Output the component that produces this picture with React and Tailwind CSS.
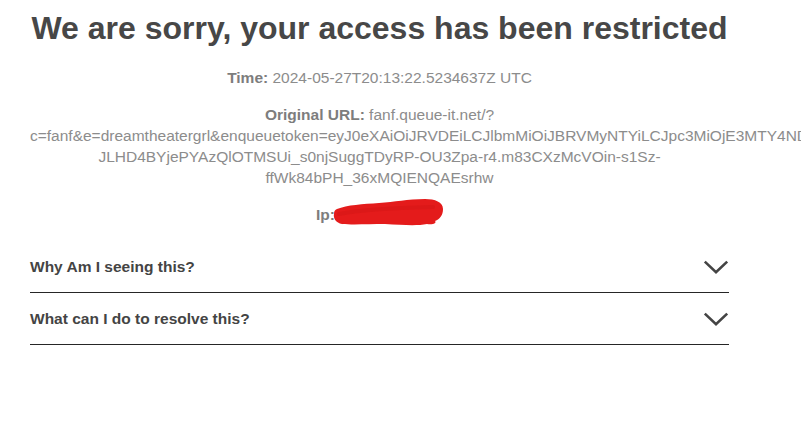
import React, { useState } from "react"

const URL_TEXT =
    "fanf.queue-it.net/?c=fanf&e=dreamtheatergrl&enqueuetoken=eyJ0eXAiOiJRVDEiLCJlbmMiOiJBRVMyNTYiLCJpc3MiOjE3MTY4NDA4MDIzOTAsImV4cCI6MTcxNjg0MDkyMjM5MH0.Hq2x7rTnK-JLHD4BYjePYAzQlOTMSUi_s0njSuggTDyRP-OU3Zpa-r4.m83CXzMcVOin-s1Sz-ffWk84bPH_36xMQIENQAEsrhw"

const faqs = [
    {
        q: "Why Am I seeing this?",
        a: "Your request was flagged by our traffic protection and access to the waiting room has been restricted.",
    },
    {
        q: "What can I do to resolve this?",
        a: "Close other tabs, disable VPN or proxy services and try again in a few minutes.",
    },
]

const Chevron = ({ open }) => (
    <svg
        width="26"
        height="16"
        viewBox="0 0 26 16"
        className={open ? "rotate-180 transition-transform" : "transition-transform"}
    >
        <polyline points="1.8,2.6 13,13.2 24.2,2.6" fill="none" stroke="#444444" strokeWidth="2.6" />
    </svg>
)

// red marker scribble hiding the ip
const Redacted = () => (
    <span className="relative inline-block w-[108px] h-[14px] align-baseline">
        <svg width="112" height="30" viewBox="0 0 112 30" className="absolute left-[-2px] top-[-8px]">
            <path
                d="M4 11 C 14 7, 30 6, 46 5 C 62 4, 74 1, 92 1 C 102 1, 110 4, 110 11 C 110 17, 107 21, 102 23 C 104 25, 100 27, 94 26 C 84 28, 70 27, 52 26 C 36 26, 20 27, 9 26 C 3 25, 0 20, 1 16 C 1 13, 2 12, 4 11 Z"
                fill="#e41b1b"
            />
            <path d="M6 16 C 26 12, 60 10, 100 9" fill="none" stroke="#dc1818" strokeWidth="4" strokeLinecap="round" />
        </svg>
    </span>
)

export default function App() {
    const [open, setOpen] = useState(null)

    return (
        <div className="min-h-screen bg-white overflow-hidden font-['Liberation_Sans',Arial,sans-serif]">
            <div className="ml-[30px] w-[699px] pt-[10px] text-center">
                <h1 className="text-[32px] leading-[36px] font-bold text-[#474747] mb-[21px]">
                    We are sorry, your access has been restricted
                </h1>

                <div className="text-[15.5px] leading-[21px] text-[#8c8c8c]">
                    <p className="mb-[16px]">
                        <span className="font-bold text-[#7d7d7d]">Time:</span> 2024-05-27T20:13:22.5234637Z UTC
                    </p>
                    <p className="mb-[16px] break-normal">
                        <span className="font-bold text-[#7d7d7d]">Original URL:</span> {URL_TEXT}
                    </p>
                    <p className="mb-[16px]">
                        <span className="font-bold text-[#7d7d7d]">Ip:</span>
                        <Redacted />
                    </p>
                </div>

                <div className="text-left">
                    {faqs.map((f, i) => (
                        <div key={f.q} className="border-b border-[#262626]">
                            <button
                                onClick={() => setOpen(open === i ? null : i)}
                                className="w-full flex items-center justify-between py-[15px] cursor-pointer"
                            >
                                <span className="text-[15.5px] leading-[21px] font-bold text-[#444444]">{f.q}</span>
                                <Chevron open={open === i} />
                            </button>
                            {open === i && (
                                <p className="pb-4 text-[14px] leading-[20px] text-[#777777]">{f.a}</p>
                            )}
                        </div>
                    ))}
                </div>
            </div>
        </div>
    )
}
